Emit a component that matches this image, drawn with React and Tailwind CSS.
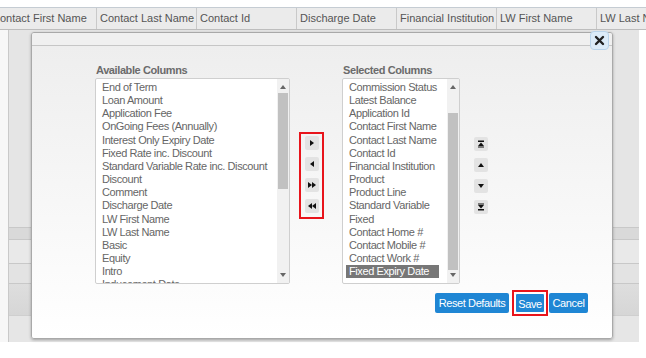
import React from 'react';

const headers = ["Contact First Name", "Contact Last Name", "Contact Id", "Discharge Date", "Financial Institution", "LW First Name", "LW Last Name"];

const available = [
    "End of Term", "Loan Amount", "Application Fee", "OnGoing Fees (Annually)", "Interest Only Expiry Date",
    "Fixed Rate inc. Discount", "Standard Variable Rate inc. Discount", "Discount", "Comment", "Discharge Date",
    "LW First Name", "LW Last Name", "Basic", "Equity", "Intro", "Inducement Date",
];

const selected = [
    "Commission Status", "Latest Balance", "Application Id", "Contact First Name", "Contact Last Name", "Contact Id",
    "Financial Institution", "Product", "Product Line", "Standard Variable", "Fixed", "Contact Home #",
    "Contact Mobile #", "Contact Work #", "Fixed Expiry Date",
];

const Tri = ({ dir }) => {
    const pts = {
        up: "1,6 4,2 7,6",
        down: "1,2 4,6 7,2",
    }[dir];
    return (
        <svg width="8" height="8" viewBox="0 0 8 8"><polygon points={pts} fill="#666" /></svg>
    );
};

const Scrollbar = ({ thumbTop, thumbHeight }) => (
    <div className="relative w-[12px] h-full bg-[#f1f1f1] flex flex-col items-center justify-between py-[4px]">
        <Tri dir="up" />
        <div className="absolute left-[1px] right-[1px] bg-[#c1c1c1]" style={{ top: thumbTop, height: thumbHeight }} />
        <Tri dir="down" />
    </div>
);

const SmallBtn = ({ children }) => (
    <div className="w-[14px] h-[14px] rounded-[2px] bg-[#e3e3e3] flex items-center justify-center">
        {children}
    </div>
);

const icon = (shape) => (
    <svg width="8" height="8" viewBox="0 0 8 8" fill="#111">{shape}</svg>
);

const BlueBtn = ({ children, className = "" }) => (
    <div className={`h-[20px] bg-[#1f86d4] text-white text-[11px] leading-[20px] rounded-[2px] text-center tracking-[-0.4px] ${className}`}>
        {children}
    </div>
);

export default function App() {
    return (
        <div className="relative w-[646px] h-[358px] bg-white overflow-hidden" style={{ fontFamily: '"Liberation Sans", Arial, sans-serif' }}>
            <div className="h-[7px]" />
            {/* header row */}
            <div className="flex h-[23px] w-[646px] bg-[#ebebeb] border-t border-[#c5ccd3] border-b border-b-[#bdbdbd] overflow-hidden text-[11px] text-[#555]">
                {headers.map((h, i) => (
                    <div key={h} className={`shrink-0 h-full leading-[21px] whitespace-nowrap overflow-hidden border-r border-[#c9c9c9] ${i === 0 ? "w-[97px]" : "w-[100px] pl-[3px]"}`}>
                        <span className={i === 0 ? "block -ml-[8px]" : ""}>{h}</span>
                    </div>
                ))}
            </div>
            {/* grid body behind modal */}
            <div className="flex h-[312px]">
                <div className="w-[9px] bg-[#f7f7f7] border-r border-[#c9c9c9]" />
                <div className="w-[630px] flex flex-col bg-[#e5e5e5]">
                    <div className="h-[197px]" />
                    <div className="h-[12px] bg-[#d9d9d9] border-t border-[#c8c8c8]" />
                    <div className="h-[24px] bg-[#e9e9e9] border-t border-[#c8c8c8]" />
                    <div className="h-[20px] bg-[#e3e3e3] border-t border-[#c8c8c8]" />
                    <div className="h-[32px] bg-gradient-to-b from-[#dedede] to-[#d6d6d6] border-t border-[#c8c8c8]" />
                    <div className="flex-1 bg-[#e6e6e6] border-t border-[#cfcfcf]" />
                </div>
            </div>

            {/* modal dialog */}
            <div className="absolute left-[31px] top-[32px] w-[582px] h-[307px] border border-[#a9a9a9] rounded-[3px] shadow-[0_1px_3px_rgba(0,0,0,0.3)] flex flex-col overflow-hidden">
                <div className="h-[13px] bg-[#f0f0f0] border-b border-[#c6c6c6]" />
                <div className="flex-1 bg-gradient-to-b from-[#eeeeee] to-[#ffffff] pt-[18px] pl-[63px] pr-[24px]">
                    <div className="flex items-start">
                        {/* available */}
                        <div className="w-[195px]">
                            <div className="h-[14px] text-[11px] font-bold text-[#6b6b6b] leading-[13px] pl-[1px] tracking-[-0.4px]">Available Columns</div>
                            <div className="h-[206px] bg-white border border-[#cfcfcf] rounded-[2px] flex overflow-hidden">
                                <div className="flex-1 pl-[6px] pt-[2px] overflow-hidden">
                                    {available.map((a) => (
                                        <div key={a} className="text-[11px] leading-[13.15px] text-[#666] whitespace-nowrap tracking-[-0.4px]">{a}</div>
                                    ))}
                                </div>
                                <Scrollbar thumbTop={14} thumbHeight={96} />
                            </div>
                        </div>
                        {/* transfer buttons */}
                        <div className="ml-[9px] mt-[68px] w-[25px] h-[87px] border-2 border-[#e8141b] flex flex-col items-center gap-[7px] pt-[2px]">
                            <SmallBtn>{icon(<polygon points="2,1 6,4 2,7" />)}</SmallBtn>
                            <SmallBtn>{icon(<polygon points="6,1 2,4 6,7" />)}</SmallBtn>
                            <SmallBtn>{icon(<><polygon points="0,1 4,4 0,7" /><polygon points="4,1 8,4 4,7" /></>)}</SmallBtn>
                            <SmallBtn>{icon(<><polygon points="4,1 0,4 4,7" /><polygon points="8,1 4,4 8,7" /></>)}</SmallBtn>
                        </div>
                        {/* selected */}
                        <div className="ml-[18px] w-[118px]">
                            <div className="h-[14px] text-[11px] font-bold text-[#6b6b6b] leading-[13px] pl-[1px] tracking-[-0.4px]">Selected Columns</div>
                            <div className="h-[206px] bg-white border border-[#cfcfcf] rounded-[2px] flex overflow-hidden">
                                <div className="flex-1 pl-[3px] pt-[2px] overflow-hidden">
                                    {selected.map((s, i) => (
                                        <div
                                            key={s}
                                            className={`text-[11px] leading-[13.15px] whitespace-nowrap pl-[3px] tracking-[-0.4px] ${i === selected.length - 1 ? "bg-[#777] text-white w-[93px]" : "text-[#666]"}`}
                                        >
                                            {s}
                                        </div>
                                    ))}
                                </div>
                                <Scrollbar thumbTop={34} thumbHeight={157} />
                            </div>
                        </div>
                        {/* order buttons */}
                        <div className="ml-[14px] mt-[73px] flex flex-col gap-[7px]">
                            <SmallBtn>{icon(<><rect x="1" y="0.5" width="6" height="1.5" /><polygon points="1,6 4,2.5 7,6" /><rect x="1" y="6.5" width="6" height="1" /></>)}</SmallBtn>
                            <SmallBtn>{icon(<polygon points="1,6 4,2 7,6" />)}</SmallBtn>
                            <SmallBtn>{icon(<polygon points="1,2 4,6 7,2" />)}</SmallBtn>
                            <SmallBtn>{icon(<><rect x="1" y="0.5" width="6" height="1" /><polygon points="1,2 4,5.5 7,2" /><rect x="1" y="6" width="6" height="1.5" /></>)}</SmallBtn>
                        </div>
                    </div>
                    {/* footer buttons */}
                    <div className="flex justify-end items-center mt-[6px]">
                        <BlueBtn className="w-[74px]">Reset Defaults</BlueBtn>
                        <div className="ml-[3px] border-2 border-[#e8141b] px-[1px] py-[1px]">
                            <BlueBtn className="w-[30px] border border-white">Save</BlueBtn>
                        </div>
                        <BlueBtn className="ml-[1px] w-[39px]">Cancel</BlueBtn>
                    </div>
                </div>
            </div>

            {/* close button */}
            <div className="absolute left-[590px] top-[31px] w-[19px] h-[19px] rounded-[4px] bg-[#dcebf8] border border-[#b9d3ea] flex items-center justify-center">
                <svg width="11" height="11" viewBox="0 0 11 11">
                    <path d="M2 2 L9 9 M9 2 L2 9" stroke="#222" strokeWidth="2.4" strokeLinecap="round" />
                </svg>
            </div>
        </div>
    );
}
